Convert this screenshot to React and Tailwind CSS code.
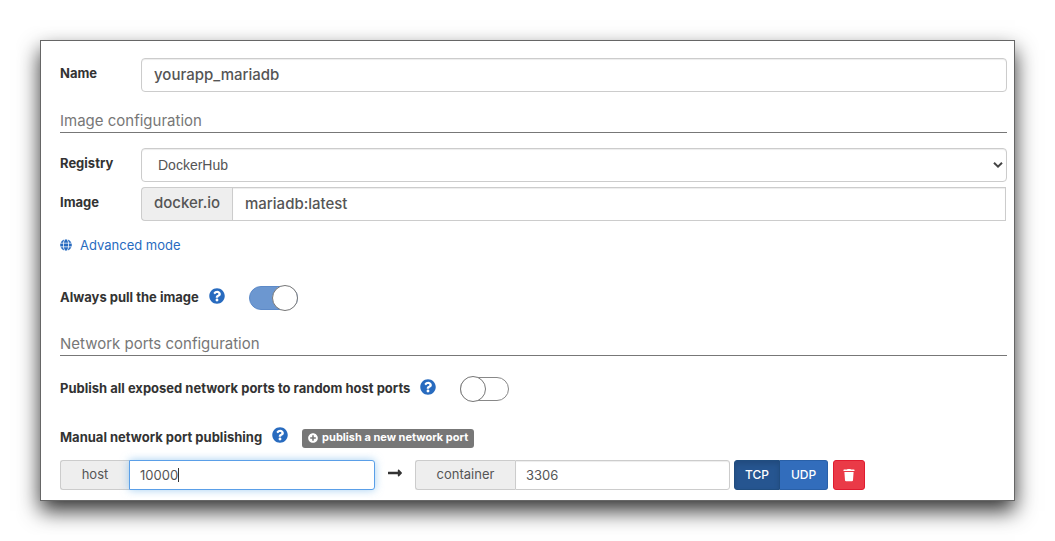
import { useState } from 'react';
import {
  FaGlobe,
  FaQuestionCircle,
  FaPlusCircle,
  FaLongArrowAltRight,
} from 'react-icons/fa';

const label = 'text-[13px] leading-5 font-bold text-[#333333]';
const field =
  'h-[34px] min-w-0 flex-1 border border-[#cccccc] bg-white px-3 pb-0.5 text-[15px] font-medium text-[#555555] shadow-[inset_0_1px_1px_rgba(0,0,0,0.075)] outline-none';
const addonSmall =
  'flex items-center justify-center rounded-l-[3px] border border-r-0 border-[#cccccc] bg-[#eeeeee] text-[13px] text-[#555555]';
const inputSmall =
  'h-[30px] min-w-0 flex-1 rounded-r-[3px] border bg-white px-2.5 text-[13px] text-[#555555] outline-none';

function SectionTitle({ children }) {
  return (
    <h2 className="border-b border-[#777777] text-[15px] leading-[23px] font-normal text-[#777777]">
      {children}
    </h2>
  );
}

function Help({ text }) {
  return (
    <button type="button" aria-label={text} className="ml-2.5 pb-0.5 text-[#286bbf]">
      <FaQuestionCircle className="size-4" />
    </button>
  );
}

function Switch({ id, checked, onChange }) {
  return (
    <span className="relative ml-6 flex h-[26px] w-[49px] items-center">
      <input
        id={id}
        type="checkbox"
        checked={checked}
        onChange={(e) => onChange(e.target.checked)}
        className="peer h-6 w-full cursor-pointer appearance-none rounded-full border border-[#888888] bg-white checked:border-[#5d8ac8] checked:bg-[#6c97d0]"
      />
      <span className="pointer-events-none absolute top-0 left-0 size-[26px] rounded-full border border-[#777777] bg-white peer-checked:left-[23px]" />
    </span>
  );
}

function TrashIcon() {
  return (
    <svg viewBox="0 0 12 14" className="h-3.5 w-3" fill="currentColor" aria-hidden="true">
      <path d="M1 1.6h3L4.6.9h2.8l.6.7h3q.5 0 .5.5v.8H.5v-.8q0-.5.5-.5ZM1.4 3.9h9.2L10 12.2q-.1 1-1.100 1H3.100q-1 0-1.100-1Z" />
    </svg>
  );
}

export default function App() {
  const [name, setName] = useState('yourapp_mariadb');
  const [image, setImage] = useState('mariadb:latest');
  const [pull, setPull] = useState(true);
  const [publish, setPublish] = useState(false);
  const [host, setHost] = useState('10000');
  const [container, setContainer] = useState('3306');
  const [protocol, setProtocol] = useState('TCP');

  return (
    <form className="m-10 border border-[#666666] bg-white pt-[17px] pr-[7px] pb-2.5 pl-[19px] font-[Inter,sans-serif] shadow-[0_10px_20px_rgba(0,0,0,0.8)]">
      <div className="flex items-start">
        <label htmlFor="name" className={`${label} w-[81px] pt-[5px]`}>
          Name
        </label>
        <input
          id="name"
          value={name}
          onChange={(e) => setName(e.target.value)}
          className={`${field} rounded`}
        />
      </div>

      <div className="mt-[17px]">
        <SectionTitle>Image configuration</SectionTitle>
      </div>

      <div className="mt-[15px] flex items-start">
        <label htmlFor="registry" className={`${label} w-[81px] pt-[5px]`}>
          Registry
        </label>
        <div className="relative flex flex-1">
          <select
            id="registry"
            className="h-[34px] w-full appearance-none rounded border border-[#cccccc] bg-white px-4 font-['Liberation_Sans',sans-serif] text-sm text-[#555555] shadow-[inset_0_1px_1px_rgba(0,0,0,0.075)] outline-none"
          >
            <option>DockerHub</option>
          </select>
          <svg
            viewBox="0 0 10 6"
            className="pointer-events-none absolute top-3.5 right-1 h-1.5 w-2.5"
            fill="none"
            stroke="#444444"
            strokeWidth="2"
          >
            <path d="M1 0.8 5 4.6 9 0.8" />
          </svg>
        </div>
      </div>

      <div className="mt-[5px] flex items-start">
        <label htmlFor="image" className={`${label} w-[81px] pt-[5px]`}>
          Image
        </label>
        <div className="flex flex-1 pr-px">
          <span className="flex w-[91px] justify-center rounded-l border border-r-0 border-[#cccccc] bg-[#eeeeee] pt-1 text-[15px] font-medium text-[#555555]">
            docker.io
          </span>
          <input
            id="image"
            value={image}
            onChange={(e) => setImage(e.target.value)}
            className={field}
          />
        </div>
      </div>

      <a
        href="#advanced"
        className="mt-3.5 flex items-center gap-2 text-[13px] leading-5 text-[#286bbf]"
      >
        <FaGlobe className="size-3" />
        Advanced mode
      </a>

      <div className="mt-[30px] flex h-[26px] items-start">
        <div className="flex h-6 items-center">
          <label htmlFor="pull" className={label}>
            Always pull the image
          </label>
          <Help text="About pulling the image" />
        </div>
        <Switch id="pull" checked={pull} onChange={setPull} />
      </div>

      <div className="mt-[21px]">
        <SectionTitle>Network ports configuration</SectionTitle>
      </div>

      <div className="mt-5 flex h-[26px] items-start">
        <div className="flex h-6 items-center">
          <label htmlFor="publish" className={label}>
            Publish all exposed network ports to random host ports
          </label>
          <Help text="About random host ports" />
        </div>
        <Switch id="publish" checked={publish} onChange={setPublish} />
      </div>

      <div className="mt-[25px] flex h-[21px] items-end">
        <div className="flex h-full items-start">
          <span className={label}>Manual network port publishing</span>
          <Help text="About manual port publishing" />
        </div>
        <button
          type="button"
          className="ml-3.5 flex h-[19px] items-center gap-1 rounded-[3px] bg-[#777777] px-1.5 pb-0.5 text-[11px] font-bold text-white"
        >
          <FaPlusCircle className="size-2.5" />
          publish a new network port
        </button>
      </div>

      <div className="mt-3 flex h-[30px]">
        <div className="relative flex w-[315px]">
          <label htmlFor="host" className={`${addonSmall} w-[69px]`}>
            host
          </label>
          <input
            id="host"
            value={host}
            onChange={(e) => setHost(e.target.value)}
            className={`${inputSmall} border-[#5a9fe8] caret-transparent shadow-[0_0_8px_rgba(102,175,233,0.6)]`}
          />
          <span className="pointer-events-none absolute top-2 left-[118px] h-3.5 w-px bg-[#333333]" />
        </div>
        <span className="flex w-10 items-start justify-center pt-[5px] text-[#333333]">
          <FaLongArrowAltRight className="size-4" />
        </span>
        <div className="flex w-[315px]">
          <label htmlFor="container" className={`${addonSmall} w-[100px]`}>
            container
          </label>
          <input
            id="container"
            value={container}
            onChange={(e) => setContainer(e.target.value)}
            className={`${inputSmall} border-[#cccccc] shadow-[inset_0_1px_1px_rgba(0,0,0,0.075)]`}
          />
        </div>
        <div className="ml-1 flex text-xs font-medium text-white">
          <button
            type="button"
            aria-pressed={protocol === 'TCP'}
            onClick={() => setProtocol('TCP')}
            className="w-[46px] rounded-l-[3px] border border-[#285a93] bg-[#2f6dbd] aria-pressed:border-[#204d80] aria-pressed:bg-[#265590] aria-pressed:shadow-[inset_0_3px_5px_rgba(0,0,0,0.125)]"
          >
            TCP
          </button>
          <button
            type="button"
            aria-pressed={protocol === 'UDP'}
            onClick={() => setProtocol('UDP')}
            className="w-12 rounded-r-[3px] border border-l-0 border-[#2960a8] bg-[#326dbc] aria-pressed:border-[#204d80] aria-pressed:bg-[#265590]"
          >
            UDP
          </button>
        </div>
        <button
          type="button"
          aria-label="Remove port"
          className="ml-[5px] flex w-8 items-center justify-center rounded-[3px] border border-[#e01b2f] bg-[#ea3a47] text-white"
        >
          <TrashIcon />
        </button>
      </div>
    </form>
  );
}
